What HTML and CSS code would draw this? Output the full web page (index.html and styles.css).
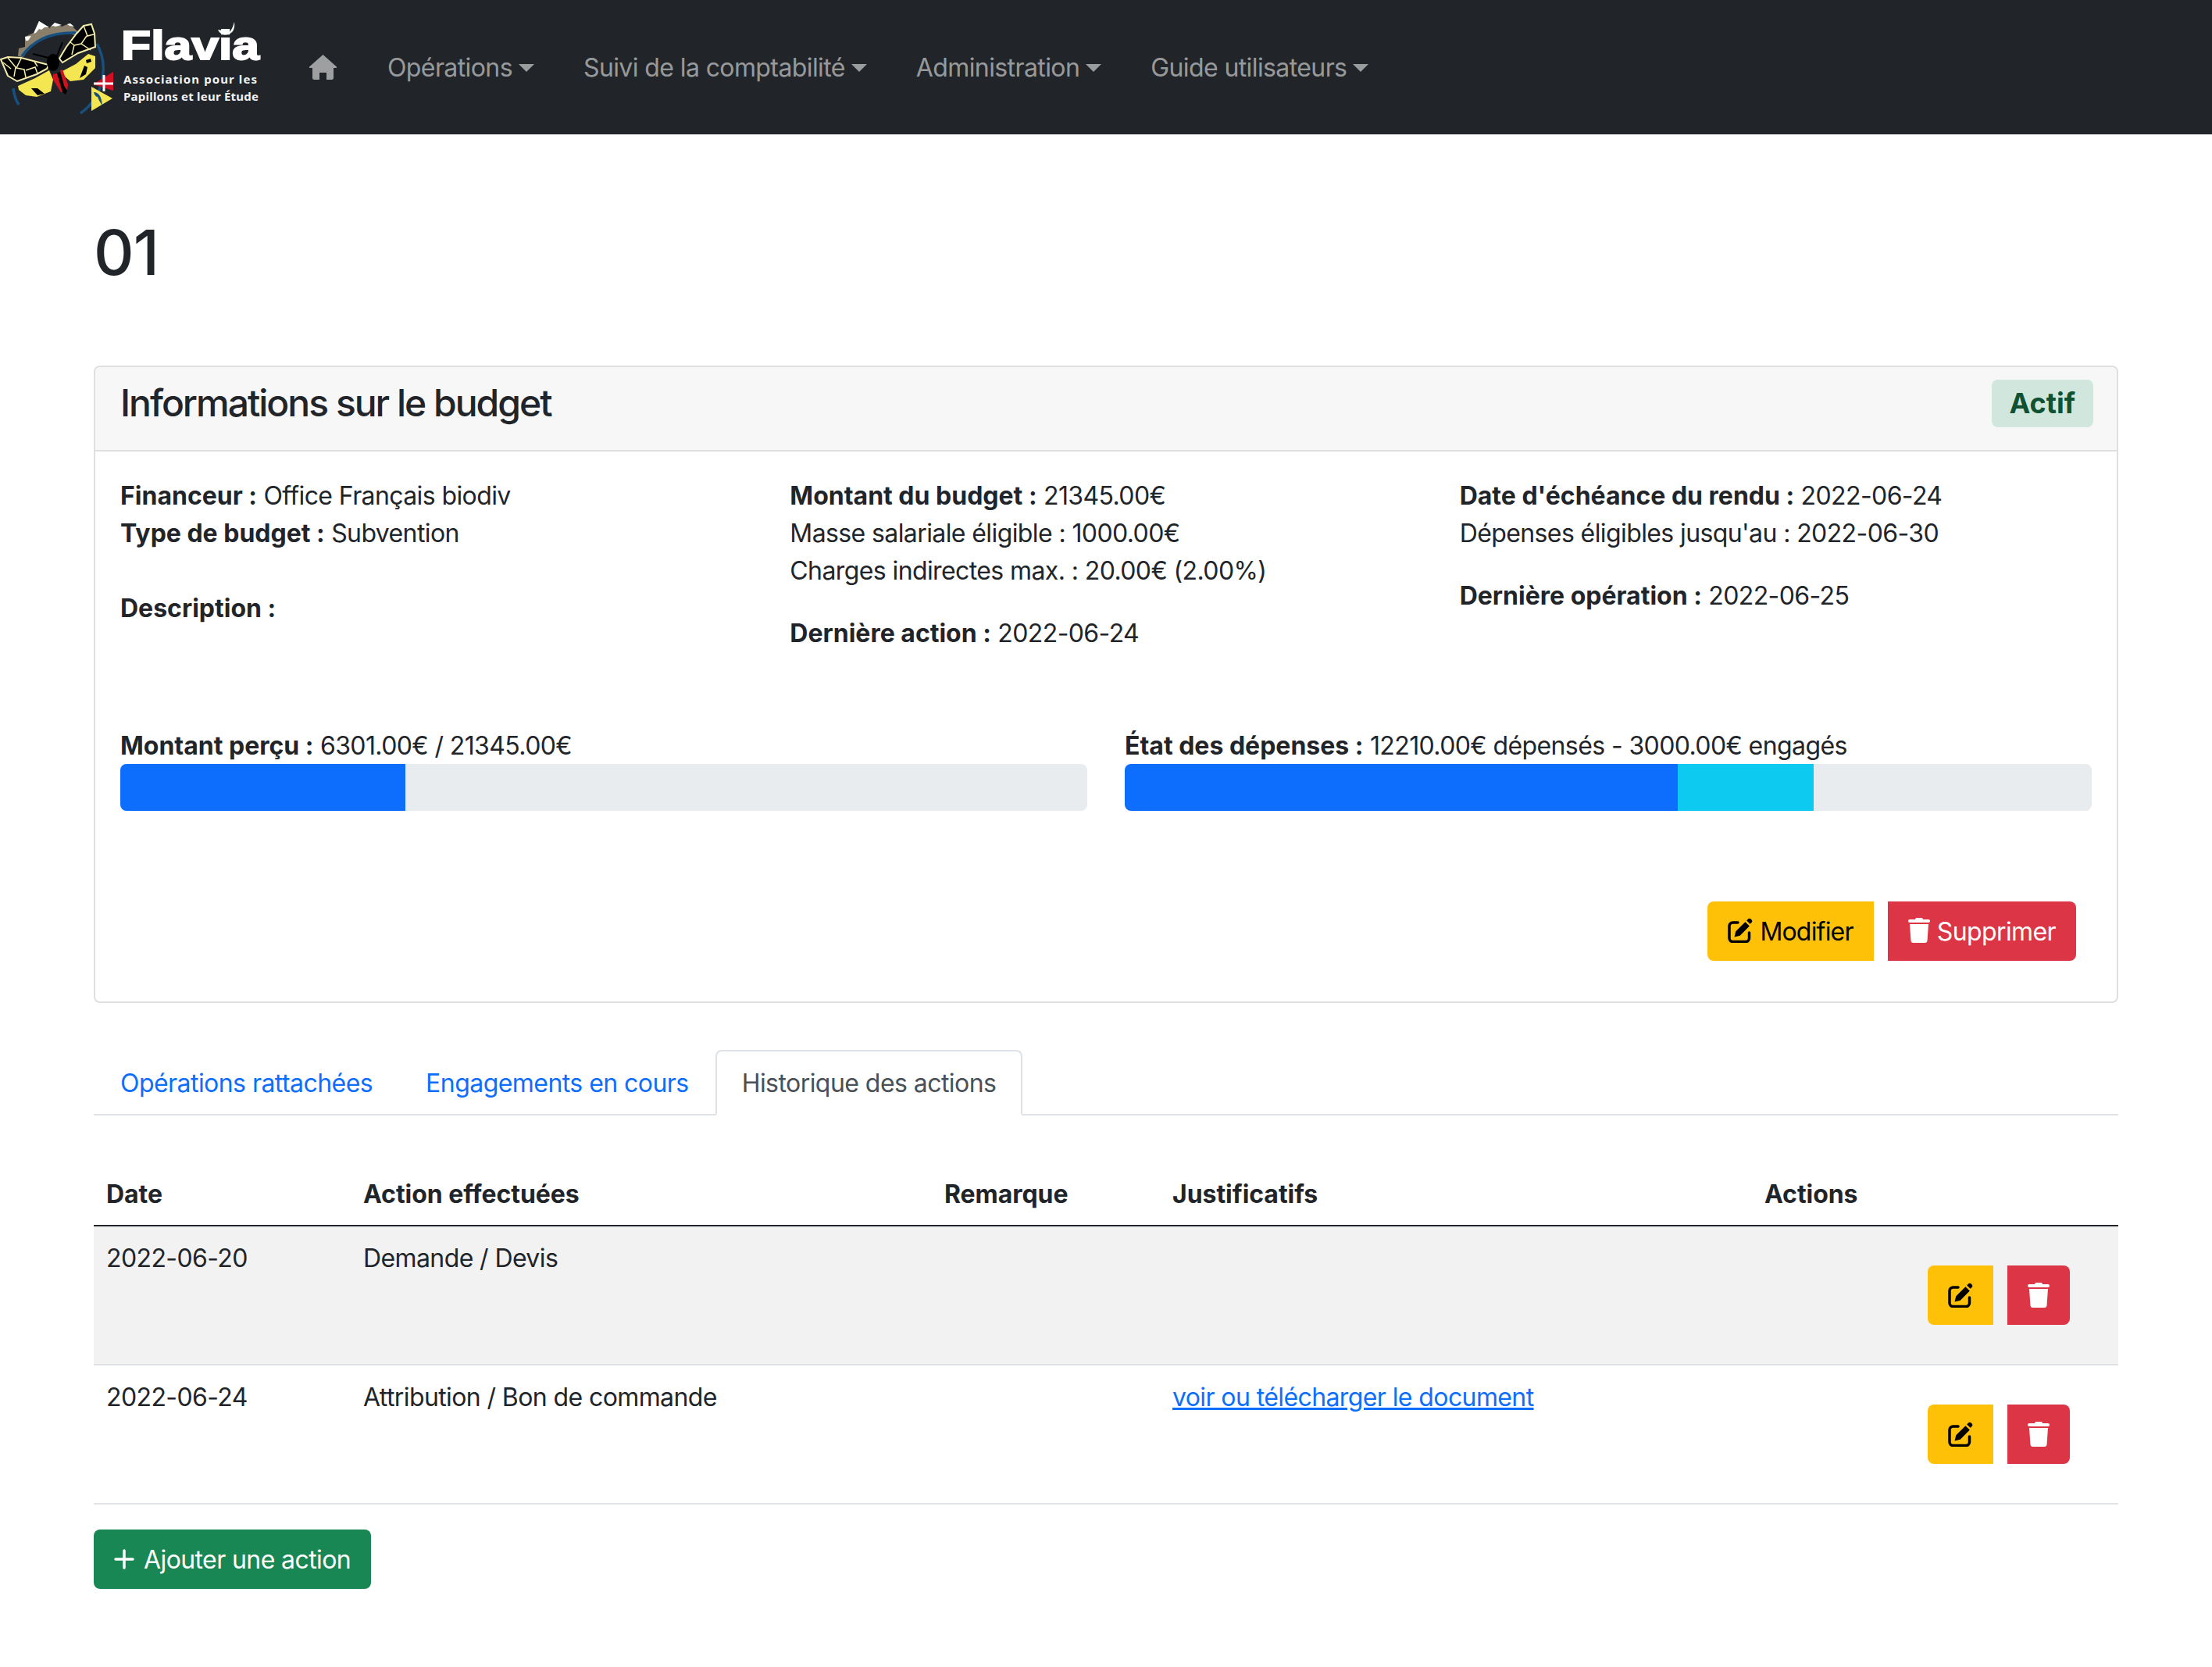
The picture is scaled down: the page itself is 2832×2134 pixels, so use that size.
FILE: index.html
```html
<!DOCTYPE html>
<html lang="fr">
<head>
<meta charset="utf-8">
<title>Flavia - Budget 01</title>
<link rel="stylesheet" href="styles.css">
</head>
<body>
<svg width="0" height="0" class="defs">
  <symbol id="i-edit" viewBox="0 0 32 32">
    <path d="M13 6H6.5A4.5 4.5 0 0 0 2 10.500V26a4.500 4.500 0 0 0 4.500 4.500H23a4.500 4.500 0 0 0 4.500-4.500V19" fill="none" stroke="currentColor" stroke-width="3.500" stroke-linecap="round"/>
    <path d="M8.500 24.500l1.800-7.200L22.400 5.200l5.400 5.400L15.700 22.700zM24.200 3.400l1.800-1.800a2.600 2.600 0 0 1 3.700 0l.7.700a2.600 2.600 0 0 1 0 3.700l-1.800 1.800z" fill="currentColor"/>
  </symbol>
  <symbol id="i-trash" viewBox="0 0 28 32">
    <path d="M9 2a2 2 0 0 1 2-2h6a2 2 0 0 1 2 2h7a2 2 0 0 1 0 4H2a2 2 0 0 1 0-4zM2 8h24l-1.500 21.500a2.700 2.700 0 0 1-2.700 2.500H6.200a2.700 2.700 0 0 1-2.700-2.500z" fill="currentColor"/>
  </symbol>
</svg>

<nav class="navbar">
  <svg class="logo" viewBox="0 0 340 172" width="340" height="172" role="img" aria-label="Flavia">
    <path d="M23 72l1-10 8-2 0-13 11-5 7-15 13 9 7-6 9 4 10-4 10 10-3 5C72 38 46 50 32 70l-2 3z" fill="#8a7f6a"/>
    <path d="M43 43l7-16 13 8-6 0-4 3-3-1-4 5zM32 47l8-1-4 6-3 0zM65 34l5-5 9 3-8 2-3-1zM86 31l4-1 5 4-6-1z" fill="#fff"/>
    <path d="M28 72C42 52 65 41 97 42M124 56C140 85 132 125 103 145M17 113C18 122 20 128 24 134" fill="none" stroke="#17507f" stroke-width="3.500"/>
    <path d="M1 76l9-3 17 1 35 9-2 5-13 7-25 9-12-7z" fill="#000" stroke="#f3ecaa" stroke-width="2"/>
    <path d="M107 33l10-2 4 12 1 17-22 8-20 12-4-5 9-15 13-17z" fill="#000" stroke="#f3ecaa" stroke-width="2"/>
    <path d="M10 74l10 12-2 12M4 80l10 8M27 75l-6 12 10 2 2 10M33 90l12-4 3 8M48 85l-4-6M120 44l-8 2-5-13M111 46l-7 10 12 8M104 56l-9 2-3 12M95 58l-5-4" fill="none" stroke="#f3ecaa" stroke-width="1.500"/>
    <path d="M78 92l19-10 16-13 9 3 0 15-15 15-17 2-7-6z" fill="#f4e651"/>
    <path d="M23 110l22-10 18-10 5 12-3 15-18 7-14-2-9-7z" fill="#f4e651"/>
    <path d="M40 113l8 0 9 7-9 2zM102 100l6-16 4 2-2 9zM110 77l6-2 1 4-6 2z" fill="#000"/>
    <path d="M68 95l5-1 10 24-5 0-10-16z" fill="#d2111e"/>
    <path d="M77 90l3-1 7 19-1 8-4-6z" fill="#d2111e"/>
    <path d="M73 94l4-2 5 18 4 6-2 5-4-3z" fill="#000"/>
    <ellipse cx="68" cy="80" rx="8" ry="11" fill="#000"/>
    <path d="M72 74l8-20M62 74L42 69" stroke="#000" stroke-width="2"/>
    <path d="M119 108l26-16v24z" fill="#d20f25"/>
    <path d="M120 107h25M133 96v21" stroke="#fff" stroke-width="3"/>
    <path d="M117 111l27 15-27 16z" fill="#f4e651"/>
    <path d="M120 118c6 0 10 5 11 17-3-4-5-8-6-11-2 0-4-2-5-6z" fill="#17507f"/>
    <text x="155" y="76" class="logo-word" textLength="177" lengthAdjust="spacingAndGlyphs">Flavia</text>
    <path d="M279 38c6 1 11 2 12 5 4-2 7-7 9-15 1 8-1 14-8 16-3 1-10 1-13-6z" fill="#fff"/>
    <text x="158" y="107" class="logo-line" textLength="171" lengthAdjust="spacing">Association pour les</text>
    <text x="158" y="129" class="logo-line" textLength="173" lengthAdjust="spacing">Papillons et leur Étude</text>
  </svg>
  <ul class="nav-menu">
    <li class="home">
      <svg viewBox="0 0 37 32" width="37" height="32" aria-label="Accueil"><path d="M18.500 0L36 15.500a1 1 0 0 1-.7 1.500H32v12.500a2.500 2.500 0 0 1-2.500 2.500H23V23h-9v9H7.500A2.500 2.500 0 0 1 5 29.500V17H1.700a1 1 0 0 1-.7-1.500z" fill="currentColor"/></svg>
    </li>
    <li class="toggle">Opérations</li>
    <li class="toggle">Suivi de la comptabilité</li>
    <li class="toggle">Administration</li>
    <li class="toggle">Guide utilisateurs</li>
  </ul>
</nav>

<main class="container">
  <h1 class="page-title">01</h1>

  <section class="card">
    <header class="card-header">
      <h2 class="card-title">Informations sur le budget</h2>
      <span class="badge">Actif</span>
    </header>
    <div class="card-body">
      <div class="info-grid">
        <div>
          <p class="block"><b>Financeur :</b> Office Français biodiv<br><b>Type de budget :</b> Subvention<br><br><b>Description :</b></p>
        </div>
        <div>
          <p class="block"><b>Montant du budget :</b> 21345.00€<br>Masse salariale éligible : 1000.00€<br>Charges indirectes max. : 20.00€ (2.00%)</p>
          <p class="block"><b>Dernière action :</b> 2022-06-24</p>
        </div>
        <div>
          <p class="block"><b>Date d'échéance du rendu :</b> 2022-06-24<br>Dépenses éligibles jusqu'au : 2022-06-30</p>
          <p class="block"><b>Dernière opération :</b> 2022-06-25</p>
        </div>
      </div>
      <div class="progress-grid">
        <div>
          <div class="progress-label"><b>Montant perçu :</b> 6301.00€ / 21345.00€</div>
          <div class="progress"><div class="bar bar-blue" style="width:29.52%"></div></div>
        </div>
        <div>
          <div class="progress-label"><b>État des dépenses :</b> 12210.00€ dépensés - 3000.00€ engagés</div>
          <div class="progress"><div class="bar bar-blue" style="width:57.2%"></div><div class="bar bar-cyan" style="width:14.05%"></div></div>
        </div>
      </div>
      <div class="card-actions">
        <a class="btn btn-warning btn-left"><svg class="ico-edit"><use href="#i-edit"/></svg>Modifier</a>
        <a class="btn btn-danger btn-right"><svg class="ico-trash"><use href="#i-trash"/></svg>Supprimer</a>
      </div>
    </div>
  </section>

  <ul class="tabs">
    <li class="tab">Opérations rattachées</li>
    <li class="tab">Engagements en cours</li>
    <li class="tab active">Historique des actions</li>
  </ul>

  <table class="table">
    <colgroup>
      <col class="c-date"><col class="c-action"><col class="c-rem"><col class="c-just"><col class="c-act">
    </colgroup>
    <thead>
      <tr><th>Date</th><th>Action effectuées</th><th>Remarque</th><th>Justificatifs</th><th>Actions</th></tr>
    </thead>
    <tbody>
      <tr class="striped">
        <td>2022-06-20</td><td>Demande / Devis</td><td></td><td></td>
        <td class="cell-actions"><div class="icon-btns">
          <a class="btn btn-warning btn-left btn-icon-w"><svg class="ico-edit"><use href="#i-edit"/></svg></a>
          <a class="btn btn-danger btn-right btn-icon-d"><svg class="ico-trash"><use href="#i-trash"/></svg></a>
        </div></td>
      </tr>
      <tr>
        <td>2022-06-24</td><td>Attribution / Bon de commande</td><td></td><td><a class="doc-link">voir ou télécharger le document</a></td>
        <td class="cell-actions"><div class="icon-btns">
          <a class="btn btn-warning btn-left btn-icon-w"><svg class="ico-edit"><use href="#i-edit"/></svg></a>
          <a class="btn btn-danger btn-right btn-icon-d"><svg class="ico-trash"><use href="#i-trash"/></svg></a>
        </div></td>
      </tr>
    </tbody>
  </table>

  <a class="btn btn-success"><svg class="ico-plus" viewBox="0 0 26 26"><path d="M13 2v22M2 13h22" fill="none" stroke="currentColor" stroke-width="3.500" stroke-linecap="round"/></svg>Ajouter une action</a>
</main>
</body>
</html>
```

FILE: styles.css
```css
* { box-sizing: border-box; }
html, body { margin: 0; padding: 0; }
body {
  font-family: Inter, "Liberation Sans", sans-serif;
  font-size: 32px;
  line-height: 48px;
  letter-spacing: -0.6px;
  color: #212529;
  background: #fff;
  height: 2134px;
  overflow: hidden;
}
.defs { position: absolute; }
b { font-weight: 700; letter-spacing: 0; }

/* navbar */
.navbar {
  display: flex;
  align-items: center;
  height: 172px;
  background: #212529;
}
.logo { display: block; flex: none; }
.logo-word {
  font-family: "Liberation Sans", sans-serif;
  font-weight: 700;
  font-size: 52px;
  letter-spacing: 0;
  fill: #fff;
  stroke: #fff;
  stroke-width: 2px;
}
.logo-line {
  font-family: "Noto Sans", sans-serif;
  font-weight: 700;
  font-size: 15px;
  letter-spacing: 0;
  fill: #f2f2f2;
}
.nav-menu {
  display: flex;
  align-items: center;
  gap: 63px;
  list-style: none;
  margin: 2px 0 0 55px;
  padding: 0;
  color: rgba(255, 255, 255, .55);
}
.home { display: flex; color: #9d9fa1; margin-right: 1px; margin-top: -2px; }
.toggle { display: flex; align-items: center; }
.toggle::after {
  content: "";
  margin-left: 8px;
  border-top: 10px solid currentColor;
  border-left: 10px solid transparent;
  border-right: 10px solid transparent;
}

/* page */
.container { padding: 103px 120px 0; }
.page-title {
  margin: 0 0 97px;
  font-size: 80px;
  line-height: 96px;
  font-weight: 500;
  letter-spacing: -1px;
}

/* card */
.card {
  border: 2px solid #dfdfdf;
  border-radius: 8px;
  height: 816px;
}
.card-header {
  display: flex;
  justify-content: space-between;
  align-items: center;
  height: 108px;
  padding: 0 32px 14px;
  background: #f7f7f7;
  border-bottom: 2px solid #dfdfdf;
  border-radius: 6px 6px 0 0;
}
.card-title { margin: 0; font-size: 48px; line-height: 58px; font-weight: 500; letter-spacing: -2px; }
.badge {
  display: block;
  padding: 0 23px;
  height: 61px;
  line-height: 61px;
  background: #d1e7dd;
  color: #0f5132;
  font-size: 36px;
  font-weight: 700;
  letter-spacing: 0;
  border-radius: 8px;
  margin-right: -2px;
}
.card-body { padding: 33px 32px 0; }
.info-grid {
  display: grid;
  grid-template-columns: repeat(3, 1fr);
  column-gap: 48px;
  height: 320px;
}
.block { margin: 0 0 32px; }
.progress-grid {
  display: grid;
  grid-template-columns: 1fr 1fr;
  column-gap: 48px;
  height: 107px;
}
.progress {
  display: flex;
  height: 60px;
  margin-top: -1px;
  background: #e9ecef;
  border-radius: 8px;
  overflow: hidden;
}
.bar-blue { background: #0d6efd; }
.bar-cyan { background: #0dcaf0; }
.card-actions {
  display: flex;
  justify-content: flex-end;
  gap: 18px;
  margin-top: 116px;
  padding-right: 20px;
}

/* buttons */
.btn {
  display: inline-flex;
  align-items: center;
  justify-content: center;
  gap: 9px;
  height: 76px;
  padding: 2px 26px 0;
  border-radius: 8px;
}
.btn-warning { background: #ffc107; color: #000; letter-spacing: -0.8px; }
.btn-danger { background: #dc3545; color: #fff; }
.btn-success { background: #198754; color: #fff; gap: 12px; }
.btn-left { border-radius: 8px 0 0 8px; }
.btn-right { border-radius: 0 8px 8px 0; }
.ico-edit { width: 32px; height: 32px; margin-top: -5px; }
.ico-trash { width: 28px; height: 32px; margin-top: -5px; }
.ico-plus { width: 26px; height: 26px; margin-top: -2px; }

/* tabs */
.tabs {
  display: flex;
  list-style: none;
  margin: 60px 0;
  padding: 0;
  border-bottom: 2px solid #dee2e6;
}
.tab {
  padding: 17px 32px 15px;
  margin-bottom: -2px;
  border: 2px solid transparent;
  border-radius: 8px 8px 0 0;
  color: #0d6efd;
  letter-spacing: -0.55px;
}
.tab.active {
  color: #495057;
  background: #fff;
  border-color: #dee2e6 #dee2e6 #fff;
}

/* table */
.table {
  width: 100%;
  table-layout: fixed;
  border-collapse: collapse;
  margin-bottom: 32px;
}
.c-date { width: 329px; }
.c-action { width: 744px; }
.c-rem { width: 292px; }
.c-just { width: 758px; }
.c-act { width: 469px; }
.table th {
  text-align: left;
  padding: 17px 16px 15px;
  font-weight: 700;
  letter-spacing: -0.05px;
  border-bottom: 2px solid #212529;
}
.table td {
  padding: 17px 16px 15px;
  vertical-align: top;
  border-bottom: 2px solid #dee2e6;
}
.striped td { background: #f2f2f2; }
.table td.cell-actions { padding: 50px 62px 50px 0; }
.icon-btns { display: flex; justify-content: flex-end; gap: 18px; }
.btn-icon-w { width: 84px; padding: 0; }
.btn-icon-d { width: 80px; padding: 0; }
.btn-icon-w .ico-edit, .btn-icon-d .ico-trash { margin-top: -1px; }
.doc-link { color: #0d6efd; text-decoration: underline; }
```
